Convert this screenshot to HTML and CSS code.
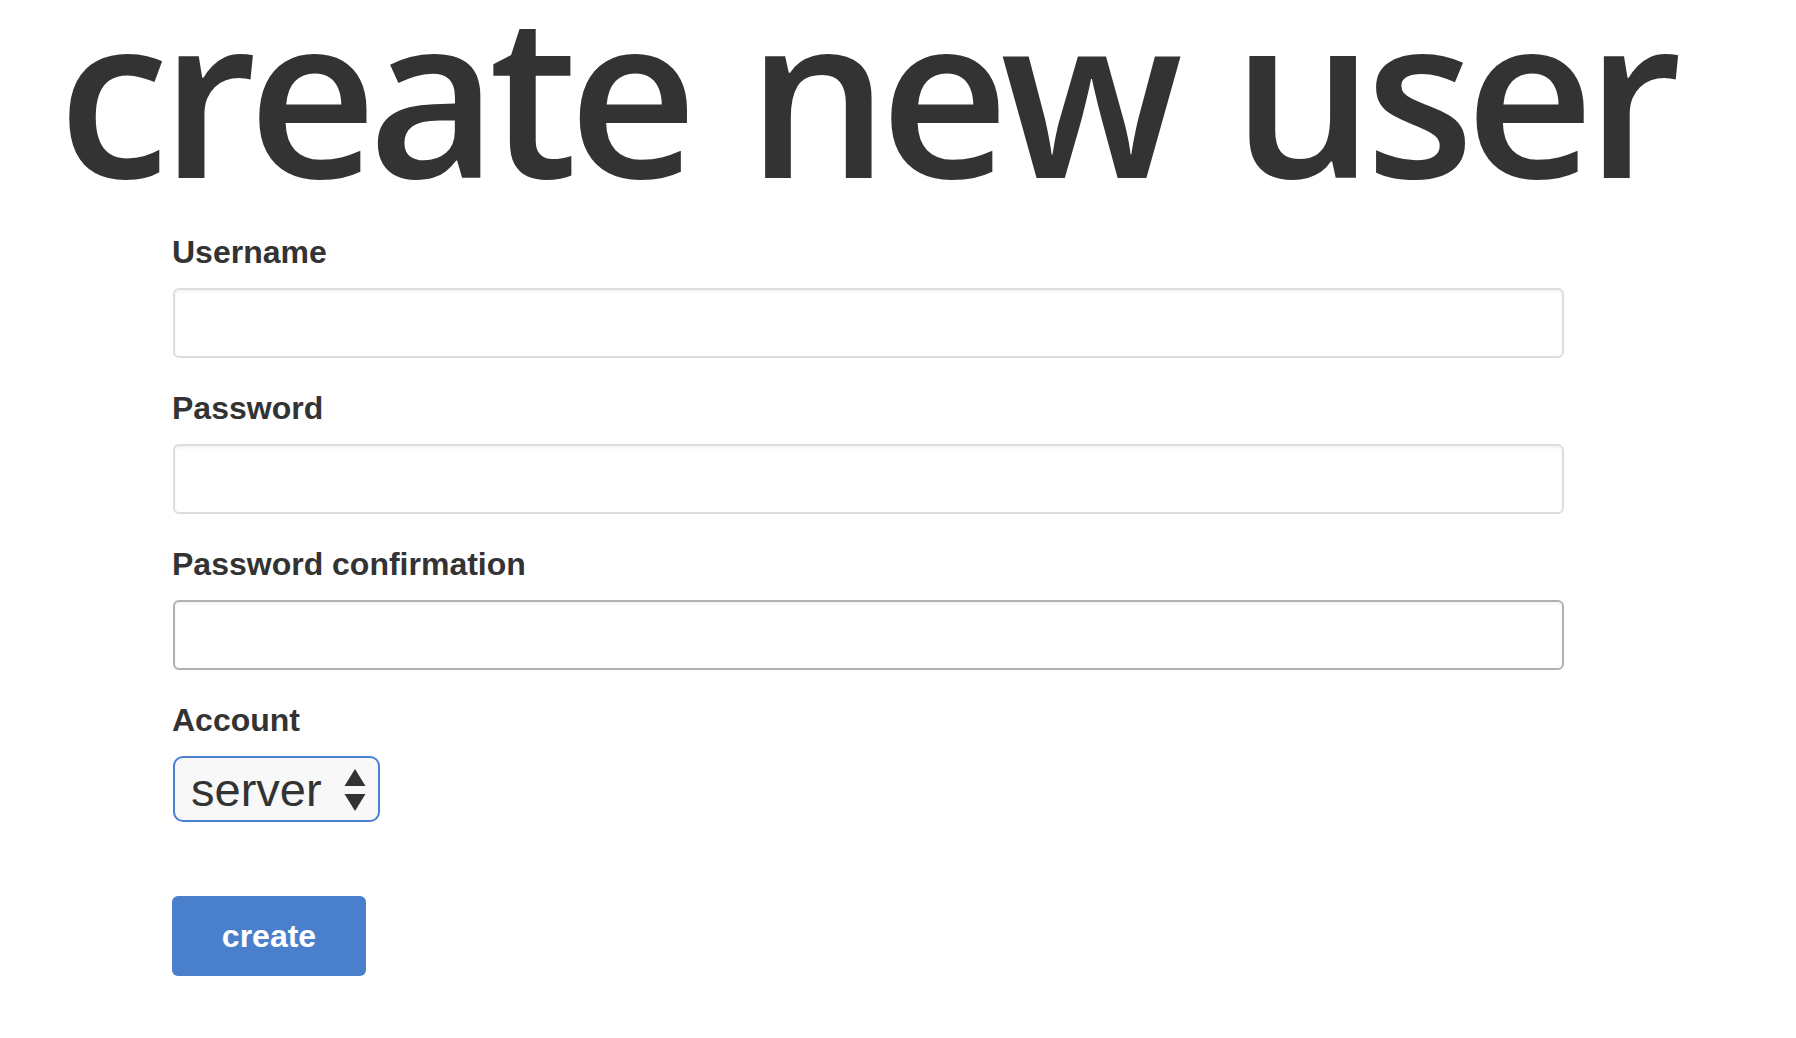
FILE: index.html
```html
<!DOCTYPE html>
<html lang="en">
<head>
<meta charset="utf-8">
<title>create new user</title>
<link rel="stylesheet" href="styles.css">
</head>
<body>
<h1 class="title">create new user</h1>
<form class="form">
  <div class="field">
    <label class="label" for="username">Username</label>
    <input class="text-input" id="username" type="text">
  </div>
  <div class="field">
    <label class="label" for="password">Password</label>
    <input class="text-input" id="password" type="password">
  </div>
  <div class="field">
    <label class="label" for="confirm">Password confirmation</label>
    <input class="text-input text-input--hover" id="confirm" type="password">
  </div>
  <div class="field">
    <label class="label" for="account">Account</label>
    <div class="select-wrap">
      <select class="select" id="account">
        <option>server</option>
      </select>
      <svg class="select-arrows" width="22" height="43" viewBox="0 0 22 43" aria-hidden="true">
        <polygon points="11,0 21.5,17 0.5,17" fill="#333"/>
        <polygon points="0.5,25 21.5,25 11,42" fill="#333"/>
      </svg>
    </div>
  </div>
  <button class="button" type="button">create</button>
</form>
</body>
</html>
```
FILE: styles.css
```css
html, body {
  margin: 0;
  padding: 0;
  background: #ffffff;
}

body {
  font-family: "Liberation Sans", Arial, Helvetica, sans-serif;
  color: #333333;
}

.title {
  margin: 0;
  padding-left: 58px;
  font-family: "Open Sans", "Noto Sans", sans-serif;
  font-weight: 600;
  font-size: 224px;
  line-height: 184px;
  letter-spacing: -9px;
  word-spacing: 9px;
  color: #333333;
  white-space: nowrap;
}

.form {
  display: flex;
  flex-direction: column;
  align-items: flex-start;
  padding-left: 172px;
  margin-top: 50px;
}

.field {
  display: flex;
  flex-direction: column;
  align-items: flex-start;
  margin-bottom: 32px;
}

.label {
  font-weight: 700;
  font-size: 32px;
  line-height: 36px;
  margin-bottom: 18px;
  color: #333333;
}

.text-input {
  box-sizing: border-box;
  width: 1391px;
  height: 70px;
  margin: 0 0 0 1px;
  border: 2px solid #dddddd;
  border-radius: 6px;
  background: #ffffff;
  box-shadow: inset 0 2px 3px rgba(0, 0, 0, 0.05);
  font-size: 32px;
  padding: 0 16px;
  outline: none;
}

.text-input--hover {
  border-color: #b1b1b1;
}

.select-wrap {
  position: relative;
  margin-left: 1px;
}

.select {
  -webkit-appearance: none;
  appearance: none;
  box-sizing: border-box;
  width: 207px;
  height: 66px;
  border: 2px solid #4a80d2;
  border-radius: 10px;
  background: #f8f8f8;
  color: #333333;
  font-family: "Liberation Sans", Arial, Helvetica, sans-serif;
  font-size: 47px;
  padding: 0 0 0 16px;
  margin: 0;
  outline: none;
}

.select-arrows {
  position: absolute;
  left: 171px;
  top: 13px;
  pointer-events: none;
}

.button {
  box-sizing: border-box;
  width: 194px;
  height: 80px;
  margin-top: 42px;
  border: none;
  border-radius: 6px;
  background: #4a7fcb;
  color: #ffffff;
  font-family: "Liberation Sans", Arial, Helvetica, sans-serif;
  font-weight: 700;
  font-size: 32px;
  padding: 0;
}
```
